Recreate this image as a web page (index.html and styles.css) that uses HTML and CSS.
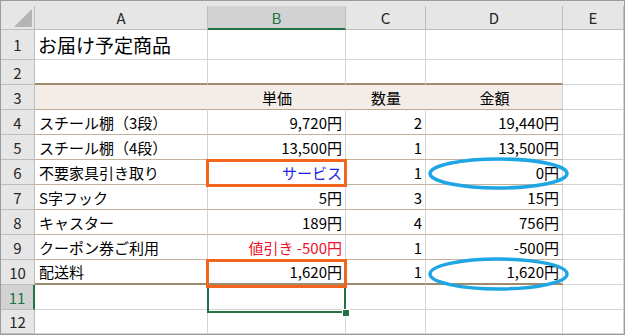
FILE: index.html
```html
<!DOCTYPE html>
<html lang="ja">
<head>
<meta charset="utf-8">
<link rel="stylesheet" href="styles.css">
</head>
<body>
<div class="sheet">
  <div class="band"></div>
  <div class="row hdr">
    <div class="corner"><svg width="18" height="18" viewBox="0 0 18 18"><polygon points="18,0 18,18 0,18" fill="#b4b4b4"/></svg></div>
    <div class="ch">A</div>
    <div class="ch sel">B</div>
    <div class="ch">C</div>
    <div class="ch">D</div>
    <div class="ch">E</div>
  </div>
  <div class="row r1">
    <div class="rh">1</div>
    <div class="c title">お届け予定商品</div>
    <div class="c"></div><div class="c"></div><div class="c"></div><div class="c"></div>
  </div>
  <div class="row r2">
    <div class="rh">2</div>
    <div class="c tt"></div><div class="c tt"></div><div class="c tt"></div><div class="c tt"></div><div class="c"></div>
  </div>
  <div class="row r3">
    <div class="rh">3</div>
    <div class="c th"></div>
    <div class="c th ctr">単価</div>
    <div class="c th ctr">数量</div>
    <div class="c th ctr last">金額</div>
    <div class="c"></div>
  </div>
  <div class="row">
    <div class="rh">4</div>
    <div class="c td">スチール棚（3段）</div>
    <div class="c td num">9,720円</div>
    <div class="c td num">2</div>
    <div class="c td num">19,440円</div>
    <div class="c"></div>
  </div>
  <div class="row">
    <div class="rh">5</div>
    <div class="c td">スチール棚（4段）</div>
    <div class="c td num">13,500円</div>
    <div class="c td num">1</div>
    <div class="c td num">13,500円</div>
    <div class="c"></div>
  </div>
  <div class="row">
    <div class="rh">6</div>
    <div class="c td">不要家具引き取り</div>
    <div class="c td num blue">サービス</div>
    <div class="c td num">1</div>
    <div class="c td num">0円</div>
    <div class="c"></div>
  </div>
  <div class="row">
    <div class="rh">7</div>
    <div class="c td">S字フック</div>
    <div class="c td num">5円</div>
    <div class="c td num">3</div>
    <div class="c td num">15円</div>
    <div class="c"></div>
  </div>
  <div class="row">
    <div class="rh">8</div>
    <div class="c td">キャスター</div>
    <div class="c td num">189円</div>
    <div class="c td num">4</div>
    <div class="c td num">756円</div>
    <div class="c"></div>
  </div>
  <div class="row">
    <div class="rh">9</div>
    <div class="c td">クーポン券ご利用</div>
    <div class="c td num red">値引き -500円</div>
    <div class="c td num">1</div>
    <div class="c td num">-500円</div>
    <div class="c"></div>
  </div>
  <div class="row">
    <div class="rh">10</div>
    <div class="c tl">配送料</div>
    <div class="c tl num">1,620円</div>
    <div class="c tl num">1</div>
    <div class="c tl num">1,620円</div>
    <div class="c"></div>
  </div>
  <div class="row">
    <div class="rh rsel">11</div>
    <div class="c"></div><div class="c"></div><div class="c"></div><div class="c"></div><div class="c"></div>
  </div>
  <div class="row r12">
    <div class="rh">12</div>
    <div class="c"></div><div class="c"></div><div class="c"></div><div class="c"></div><div class="c"></div>
  </div>
</div>
<svg class="overlay" width="625" height="335" viewBox="0 0 625 335">
  <rect x="208" y="287" width="137" height="25" fill="none" stroke="#217346" stroke-width="2"/>
  <rect x="342.5" y="309.5" width="7" height="7" fill="#217346" stroke="#ffffff" stroke-width="1"/>
  <rect x="207.5" y="160.5" width="138" height="25" fill="none" stroke="#f2651f" stroke-width="3"/>
  <rect x="207.5" y="260.5" width="138" height="26" fill="none" stroke="#f2651f" stroke-width="3"/>
  <ellipse cx="498.5" cy="173.5" rx="68.5" ry="14.5" fill="none" stroke="#1ea5e3" stroke-width="3.5"/>
  <ellipse cx="498.5" cy="274" rx="68.5" ry="15" fill="none" stroke="#1ea5e3" stroke-width="3.5"/>
</svg>
</body>
</html>
```
FILE: styles.css
```css
html, body {
  margin: 0;
  padding: 0;
  background: #ffffff;
}
body {
  position: relative;
  width: 625px;
  height: 335px;
  overflow: hidden;
  font-family: "Noto Sans CJK JP", "Noto Sans", sans-serif;
  font-size: 15px;
  color: #000;
}
.sheet {
  width: 625px;
  height: 335px;
  box-sizing: border-box;
  border: 1px solid #9c9c9c;
  background: #ffffff;
  display: flex;
  flex-direction: column;
}
.band {
  height: 5px;
  background: #e6e6e6;
}
.row {
  display: grid;
  grid-template-columns: 34px 173px 138px 80px 137px 1fr;
  height: 25px;
}
.row.hdr { height: 24px; }
.row.r1 { height: 30px; }
.row.r12 { height: 24px; }

.corner {
  background: #e6e6e6;
  border-right: 1px solid #bdbdbd;
  border-bottom: 1px solid #bdbdbd;
  box-sizing: border-box;
  display: flex;
  align-items: flex-end;
  justify-content: flex-end;
  padding: 0 2px 2px 0;
}
.ch {
  background: #e6e6e6;
  border-right: 1px solid #bdbdbd;
  border-bottom: 1px solid #bdbdbd;
  box-sizing: border-box;
  display: flex;
  align-items: center;
  justify-content: center;
  color: #262626;
  font-size: 15px;
}
.ch.sel {
  background: #d2d2d2;
  border-bottom: 2px solid #217346;
  color: #217346;
}
.rh {
  background: #e6e6e6;
  border-right: 1px solid #bdbdbd;
  border-bottom: 1px solid #bdbdbd;
  box-sizing: border-box;
  display: flex;
  align-items: center;
  justify-content: center;
  color: #262626;
  font-size: 15px;
}
.rh.rsel {
  background: #d2d2d2;
  border-right: 2px solid #217346;
  color: #217346;
}
.c {
  border-right: 1px solid #d4d4d4;
  border-bottom: 1px solid #d4d4d4;
  box-sizing: border-box;
  display: flex;
  align-items: center;
  padding: 0 3px 0 4px;
  white-space: nowrap;
  overflow: visible;
}
.c.title {
  font-size: 19px;
  padding-left: 3px;
}
.c.tt {
  border-bottom: 2px solid #a38c6f;
}
.c.th {
  background: #f3ece7;
  border-right-color: #f3ece7;
  border-bottom: 1px solid #bca78e;
}
.c.th.last {
  border-right-color: #d4d4d4;
}
.c.ctr {
  justify-content: center;
}
.c.td {
  border-bottom: 1px solid #c4b29d;
}
.c.tl {
  border-bottom: 2px solid #9e8a6c;
}
.c.num {
  justify-content: flex-end;
}
.blue { color: #1f1fe6; }
.red { color: #f0102a; }

.overlay {
  position: absolute;
  left: 0;
  top: 0;
  pointer-events: none;
}
```
